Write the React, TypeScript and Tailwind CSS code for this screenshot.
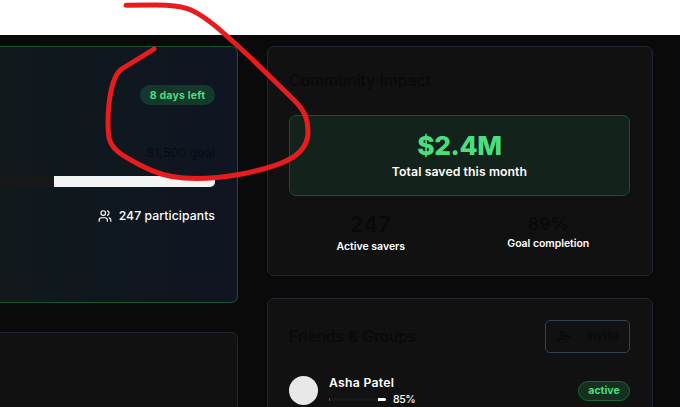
import type { ReactNode } from "react";
import { UserPlus, Users } from "lucide-react";

interface Stat {
  value: string;
  label: string;
  valueClass: string;
  labelClass: string;
}

interface Friend {
  name: string;
  progress: number;
  status: string;
}

const stats: Stat[] = [
  {
    value: "247",
    label: "Active savers",
    valueClass: "text-[21px] leading-[30px] tracking-[0.8px]",
    labelClass: "-mt-px text-[10.5px] leading-4",
  },
  {
    value: "89%",
    label: "Goal completion",
    valueClass: "text-[18px] leading-[28px] tracking-[-0.1px]",
    labelClass: "-mt-px text-[10.5px] leading-[14px] tracking-[-0.05px]",
  },
];

const friends: Friend[] = [{ name: "Asha Patel", progress: 85, status: "active" }];

const Card = ({ children, classname = "" }: { children?: ReactNode; classname?: string }) => {
  return (
    <section className={`shrink-0 rounded-[7px] border border-[#1f2733] bg-[#111111] ${classname}`}>
      {children}
    </section>
  );
};

const Challenge = () => {
  return (
    <section className="flex h-[257px] shrink-0 flex-col items-end rounded-r-[7px] border border-l-0 border-[#14532d] bg-linear-to-r from-[#10191c] to-[#0f1521] pr-[22px] pt-[38px]">
      <span className="flex h-5 w-[75px] items-center justify-center rounded-full bg-[#14382b] pt-px text-[10.5px] font-bold tracking-[0.2px] text-[#4ade80]">
        8 days left
      </span>
      <span className="mt-[39px] text-[12.25px] leading-[18px] tracking-[0.1px] text-[#080b10]">$1,500 goal</span>
      <div className="mt-[14px] flex h-[11px] w-full overflow-hidden rounded-br-[5px] bg-[#f4f4f4]">
        <div className="w-[54px] bg-[#18181b]" />
      </div>
      <div className="mt-5 flex items-center gap-[7px] text-[12.25px] leading-[18px] text-white">
        <Users className="size-[14px]" strokeWidth={2} />
        <span className="font-medium tracking-[0.06px]">247 participants</span>
      </div>
    </section>
  );
};

const Impact = () => {
  return (
    <Card classname="h-[230px] pl-[21px] pr-[22px] pt-[21px]">
      <h2 className="h-[47px] text-[15.75px] font-medium leading-[26px] tracking-[-0.05px] text-[#09090b]">Community Impact</h2>
      <div className="flex h-[81px] flex-col items-center rounded-[7px] border border-[#175130] bg-[#13221a] pt-[14px]">
        <span className="text-[26.25px] font-extrabold leading-[32px] tracking-[-0.3px] text-[#4ade80]">$2.4M</span>
        <span className="mt-px text-[12.25px] font-semibold leading-[18px] tracking-[0.08px] text-white">Total saved this month</span>
      </div>
      <div className="mt-[14px] grid grid-cols-2 gap-[14px] text-center">
        {stats.map((item) => (
          <div key={item.label} className="flex flex-col">
            <span className={`font-bold text-[#09090b] ${item.valueClass}`}>{item.value}</span>
            <span className={`font-semibold text-white ${item.labelClass}`}>{item.label}</span>
          </div>
        ))}
      </div>
    </Card>
  );
};

const Friends = () => {
  return (
    <Card classname="h-[240px] pl-[21px] pr-[22px] pt-[21px]">
      <div className="flex items-center justify-between">
        <h2 className="text-[15.75px] font-medium tracking-[-0.15px] text-[#09090b]">Friends &amp; Groups</h2>
        <button className="flex h-[33px] w-[85px] items-center justify-between rounded-[5px] border border-[#334155] pl-[11px] pr-[10px] text-[12.25px] font-medium tracking-[0.2px] text-[#09090b]">
          <UserPlus className="size-[14px]" />
          Invite
        </button>
      </div>
      {friends.map((friend) => (
        <div key={friend.name} className="mt-[21px] flex items-center">
          <div className="size-[29px] rounded-full bg-[#e8e8e8]" />
          <div className="ml-[11px] flex-1">
            <p className="text-[12.25px] font-semibold leading-[18px] tracking-[0.25px] text-white">{friend.name}</p>
            <div className="flex items-center gap-[7px]">
              <div className="flex h-[3px] w-[57px] overflow-hidden rounded-r-full border-l border-[#555555] bg-white">
                <div className="bg-[#18181b]" style={{ width: `${friend.progress}%` }} />
              </div>
              <span className="pt-px text-[10.5px] font-medium leading-[14px] tracking-[-0.4px] text-white">{friend.progress}%</span>
            </div>
          </div>
          <span className="flex h-5 w-[52px] items-center justify-center rounded-full border border-[#166534] bg-[#15301f] pt-px text-[10.5px] font-bold text-[#4ade80]">
            {friend.status}
          </span>
        </div>
      ))}
    </Card>
  );
};

const App = () => {
  return (
    <div className="relative flex h-[407px] w-[680px] flex-col overflow-hidden bg-white font-['Inter','Liberation_Sans',sans-serif]">
      <header className="h-[35px] shrink-0" />
      <main className="flex min-h-0 flex-1 gap-[29px] overflow-hidden bg-[#0a0a0a] pt-[11px]">
        <div className="flex w-[238px] shrink-0 flex-col gap-[29px]">
          <Challenge />
          <Card classname="h-[120px] rounded-l-none border-l-0" />
        </div>
        <div className="flex w-[386px] shrink-0 flex-col gap-[22px]">
          <Impact />
          <Friends />
        </div>
      </main>

      {/* pen mark */}
      <svg className="pointer-events-none absolute inset-0" width="680" height="407" fill="none">
        <path
          d="M126 5.2 L155 5 C172 5 182 6 191 10 C209 18 229 38 252 59 L294 100 C306 112 308 120 308 134 C307 146 300 154 288 160 C277 166 257 171 239 174.500 C219 178 198 179 184 178 C166 177 153 172 140 165 C123 156 109 149 108.500 134 C107 117 109 91 115 78 C118 71 121 69 125 67 L154 49"
          stroke="#e81c1c"
          strokeWidth="5"
          strokeLinecap="round"
          strokeLinejoin="round"
        />
      </svg>
    </div>
  );
};

export default App;
